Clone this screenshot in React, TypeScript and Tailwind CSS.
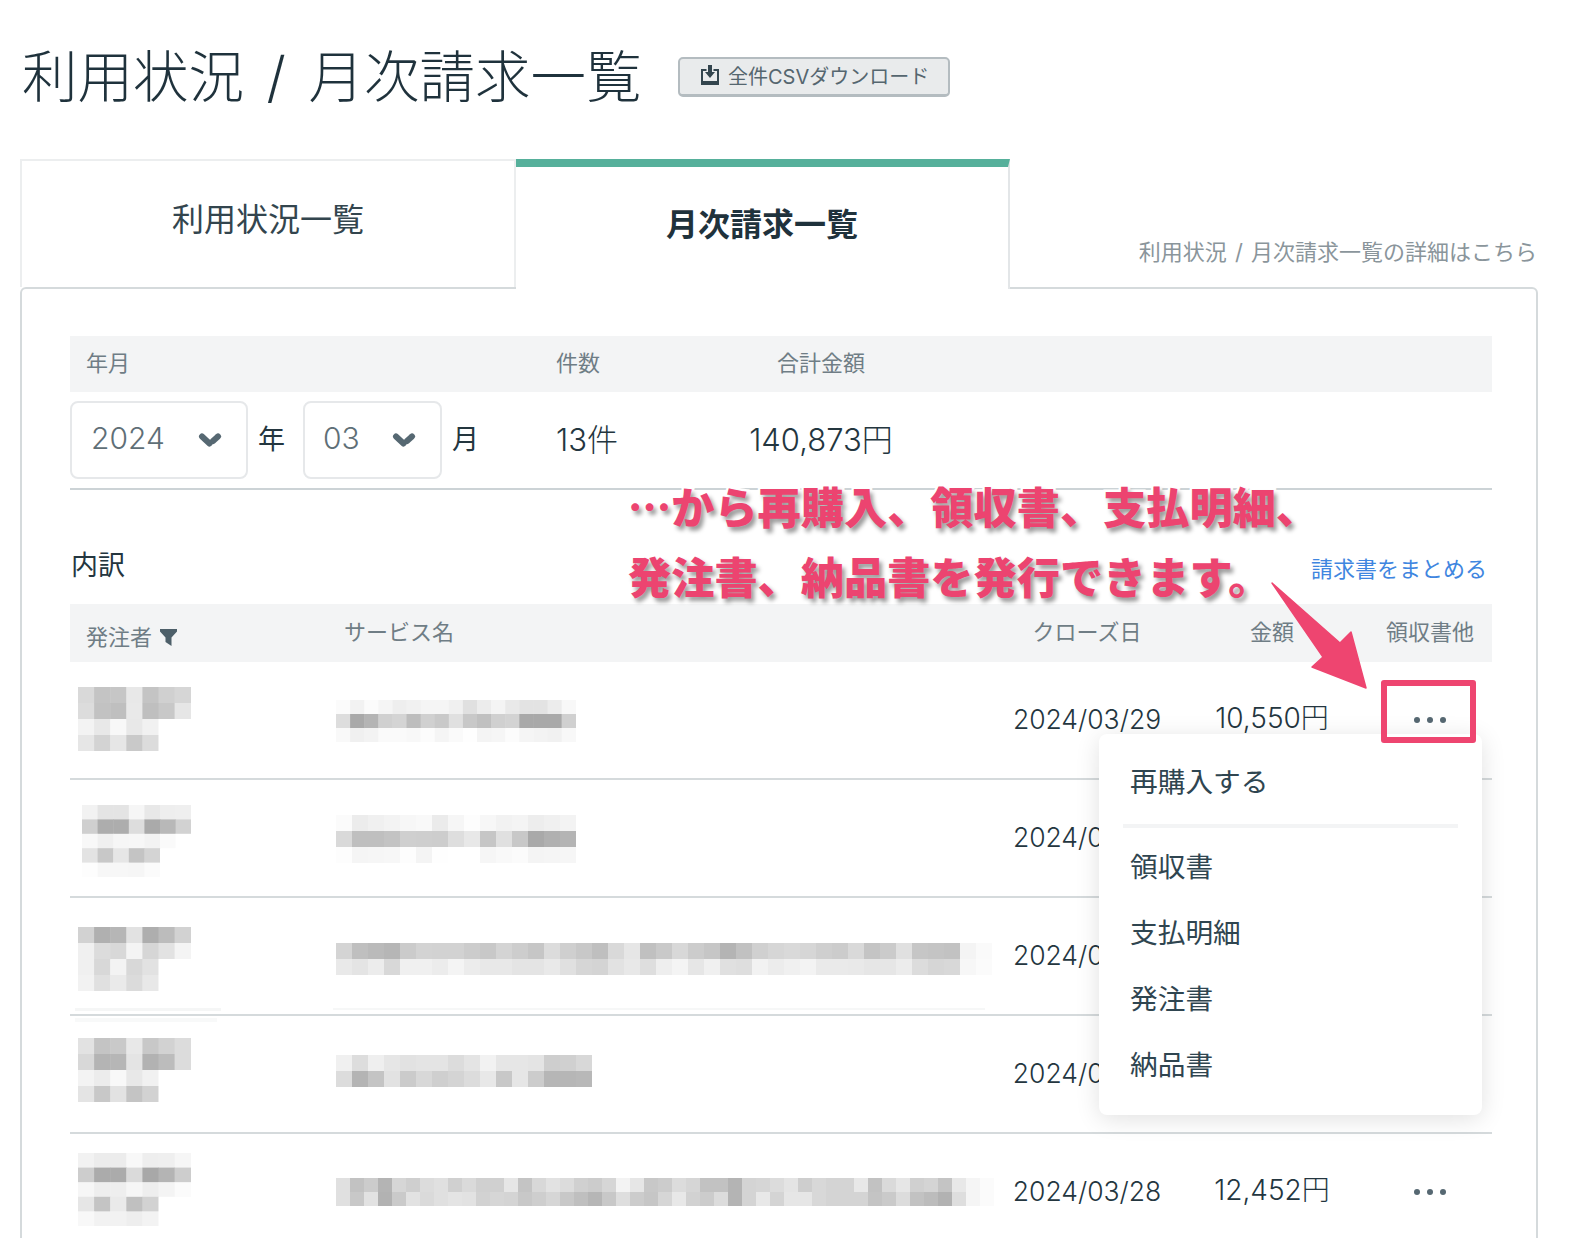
const font = 'font-["Inter","Noto_Sans_CJK_JP",sans-serif]'

type Block = { cols: string[]; w: number; h: number; cls: string }

// pixelated placeholders, each string is one row of grey levels
const rows: { date: string; amount?: string; name: Block; service: Block }[] = [
  {
    date: '2024/03/29',
    amount: '10,550円',
    name: {
      w: 16.1, h: 16, cls: 'ml-[8px] mt-[25px]',
      cols: ['d9 c4 c6 e8 c4 d0 d6', 'dc c2 bf e9 bf c8 e6', 'f3 e8 f8 e8 f1 ff ff', 'e6 d3 e6 c9 dc ff ff'],
    },
    service: {
      w: 14.1, h: 14, cls: 'mt-[38px]',
      cols: [
        'fb f2 fb f5 ee f1 f5 f5 f0 e0 ec f4 e9 e3 e3 ec f8',
        'dd a9 b4 d0 d4 bd d0 c9 e0 c8 c0 d0 d3 a9 a9 a9 d0',
        'f9 f0 f3 fa fa f8 fc f5 fa fe f4 f6 fc f5 f3 f1 f8',
      ],
    },
  },
  {
    date: '2024/03/29',
    name: {
      w: 15.6, h: 14.4, cls: 'ml-[12px] mt-[25px]',
      cols: ['f2 e4 e4 f6 e8 ee ef', 'cf ad ad dd aa b8 d2', 'f8 f0 f6 f7 f3 fa ff', 'e3 c8 e6 c4 d4 ff ff', 'fd f7 f7 f6 fb ff ff'],
    },
    service: {
      w: 16, h: 16, cls: 'mt-[35px]',
      cols: [
        'fb ec f0 f3 f7 f9 eb f6 fd f7 f2 f4 ed f0 f3',
        'd9 bf bf c3 cf ce cd de e8 c6 e0 c8 a9 b0 b4',
        'fd f5 f6 f7 fd f4 fe ff ff f6 f9 fb f4 f5 f6',
      ],
    },
  },
  {
    date: '2024/03/29',
    name: {
      w: 16.1, h: 16, cls: 'ml-[8px] mt-[29px]',
      cols: ['d2 b0 b6 e2 ae bc d2', 'f0 dc d8 f4 d6 e2 f4', 'f0 d8 f3 d8 e2 ff ff', 'f2 e0 ea db e8 ff ff'],
    },
    service: {
      w: 16, h: 16, cls: 'mt-[45px]',
      cols: [
        'd4 bf ba b6 cb d3 d2 d2 cc c8 d4 cd c6 dc cf c8 bf d9 e6 c0 c9 d8 cc c6 b4 c1 d0 d6 d9 d6 cf cc d9 c4 cb e0 c6 c4 c2 f4 fa',
        'e9 e4 ec d8 f0 f0 ec f4 ec e8 e8 e4 e4 e9 e0 d6 d4 e2 e8 de ee f4 e6 f0 e0 de f2 ec f0 f3 ea ea e9 e6 e6 ec dc d6 d8 f7 fb',
      ],
    },
  },
  {
    date: '2024/03/28',
    name: {
      w: 16.1, h: 16, cls: 'ml-[8px] mt-[22px]',
      cols: ['e2 c4 c9 e8 c8 d2 dc', 'd8 b4 b6 e4 b2 bc dc', 'f3 ec f8 e8 f1 ff ff', 'e4 c8 e2 c4 d2 ff ff'],
    },
    service: {
      w: 16, h: 16, cls: 'mt-[39px]',
      cols: [
        'f0 dd ef e6 e2 e4 e4 dc e4 f2 e6 e6 e4 ce d0 d8',
        'dc b4 c4 e2 cb d8 cf d4 dc e8 c8 e6 cc b6 b6 b8',
      ],
    },
  },
  {
    date: '2024/03/28',
    amount: '12,452円',
    name: {
      w: 16.1, h: 14.6, cls: 'ml-[8px] mt-[19px]',
      cols: ['f2 ec ec f8 ee ef f6', 'cd ab ab da a8 b4 cd', 'f6 ee ee f6 ee f4 fb', 'e6 c4 ea c0 d2 ff ff', 'f8 f2 f2 ee f3 ff ff'],
    },
    service: {
      w: 14, h: 14, cls: 'mt-[44px]',
      cols: [
        'e0 c2 cc b4 d6 cf dc e0 d0 da d0 d0 e6 c4 d8 e2 dc d0 cc d6 f3 e6 c8 cc dc d6 c2 c2 b4 d4 d6 dc e4 ce d8 d4 d4 e8 c2 da e6 d0 d4 c4 e8 f5 fb',
        'e0 c8 e2 b2 ca e2 da e0 e4 e2 d2 d6 d4 c8 ce d6 c8 bf b6 c8 de cc c6 d6 e8 d2 cc dc b4 d4 e8 d4 e6 e6 d8 d4 d4 d4 c4 ca dc c2 bc b2 de f5 fb',
      ],
    },
  },
]

function Mosaic({ block }: { block: Block }) {
  const grid = block.cols.map((r) => r.split(' '))
  const width = grid[0].length * block.w
  const height = grid.length * block.h
  return (
    <svg width={width} height={height} className={`block blur-[0.4px] ${block.cls}`}>
      {grid.map((r, y) =>
        r.map((c, x) => (
          <rect key={x} x={x * block.w} y={y * block.h} width={block.w + 0.5} height={block.h + 0.5} fill={`#${c}${c}${c}`} />
        ))
      )}
    </svg>
  )
}

function Chevron() {
  return (
    <svg width="24" height="14" viewBox="0 0 24 14" fill="none" stroke="#566872" strokeWidth="6" strokeLinecap="round">
      <path d="M4 3.5l7.5 7" />
      <path d="M20 3.5l-5 4.5" />
    </svg>
  )
}

function Dots() {
  return (
    <div className="flex justify-center gap-[7px]">
      <span className="h-[6px] w-[6px] rounded-full bg-[#566872]" />
      <span className="h-[6px] w-[6px] rounded-full bg-[#566872]" />
      <span className="h-[6px] w-[6px] rounded-full bg-[#566872]" />
    </div>
  )
}

export default function App() {
  return (
    <div className={`relative h-[1238px] w-[1584px] overflow-hidden bg-white text-[#24363f] ${font}`}>
      <div className="flex h-[154px] items-center pl-[22px]">
        <h1 className="w-[620px] whitespace-nowrap text-[55.5px] font-light leading-none text-[#1f323c] [word-spacing:7px]">利用状況 / 月次請求一覧</h1>
        <button className="ml-[36px] flex h-[40px] w-[272px] items-center rounded-[5px] border-2 border-b-[3px] border-[#b4bcc0] bg-[#e9ebec] pl-[20px] text-[20px] text-[#55666f]">
          <svg width="20" height="20" viewBox="0 0 20 20" fill="#33454e" className="mb-[3px] mr-[8px]">
            <path d="M1 4h5.5v2H3v10h14V6h-3.500V4H19v16H1zM4 17h12v1.500H4z" />
            <path d="M8 0h4v7h3l-5 6-5-6h3z" />
          </svg>
          全件CSVダウンロード
        </button>
      </div>

      <div className="ml-[20px] mt-[5px] w-[1518px]">
        <div className="flex h-[128px] items-stretch">
          <div className="flex w-[496px] items-center justify-center border-x-2 border-t-2 border-[#eceeef] pb-[9px] text-[32px] text-[#33454e]">
            利用状況一覧
          </div>
          <div className="relative z-10 -mb-[2px] flex h-[130px] w-[494px] items-center justify-center border-r-2 border-t-[8px] border-r-[#e3e6e8] border-t-[#56b09b] bg-white pb-[7px] text-[32px] font-bold text-[#1f323c]">
            月次請求一覧
          </div>
          <div className="flex flex-1 items-end justify-end pb-[19px] pr-[1px] text-[22px] leading-[32px] text-[#8a959b] [word-spacing:2px]">
            利用状況 / 月次請求一覧の詳細はこちら
          </div>
        </div>

        <div className="h-[1000px] rounded-t-[6px] border-2 border-[#d5dadc] pl-[48px] pr-[44px] pt-[47px]">
          <div className="grid h-[56px] grid-cols-[480px_150px_242px] items-center bg-[#f3f4f5] pb-[2px] text-[22px] text-[#6f7d85]">
            <span className="pl-[16px]">年月</span>
            <span className="pl-[6px]">件数</span>
            <span className="text-center">合計金額</span>
          </div>
          <div className="grid h-[98px] grid-cols-[480px_150px_242px] items-center border-b-2 border-[#ccd3d6] text-[31px] font-light">
            <div className="flex items-center">
              <div className="flex h-[78px] w-[178px] items-center justify-between rounded-[8px] border-2 border-[#e6e8ea] pl-[19px] pr-[24px] text-[#5f6f77]">
                <span className="pb-[4px] text-[30px]">2024</span>
                <Chevron />
              </div>
              <span className="ml-[10px] w-[45px] text-[27px] font-normal">年</span>
              <div className="flex h-[78px] w-[139px] items-center justify-between rounded-[8px] border-2 border-[#e6e8ea] pl-[18px] pr-[24px] text-[#5f6f77]">
                <span className="pb-[4px] text-[30px]">03</span>
                <Chevron />
              </div>
              <span className="ml-[10px] text-[27px] font-normal">月</span>
            </div>
            <span className="pl-[6px]">13件</span>
            <span className="text-center">140,873円</span>
          </div>

          <div className="flex h-[114px] items-end justify-between pb-[18px] pl-[1px] pr-[5px]">
            <span className="text-[27px] leading-[40px]">内訳</span>
            <span className="mb-[1px] text-[22px] leading-[32px] text-[#3f86e0]">請求書をまとめる</span>
          </div>

          <div className="grid h-[58px] grid-cols-[266px_666px_170px_200px_116px] items-center bg-[#f3f4f5] pb-[2px] text-[22px] text-[#6f7d85]">
            <span className="flex items-center pl-[16px] pt-[10px]">
              発注者
              <svg width="17" height="17" viewBox="0 0 17 17" fill="#4d5f69" className="ml-[8px]">
                <path d="M0 0h17v2.500l-5.500 6v8.500l-6-4V8.500L0 2.500z" />
              </svg>
            </span>
            <span className="pl-[8px]">サービス名</span>
            <span className="text-center">クローズ日</span>
            <span className="text-center">金額</span>
            <span className="text-center">領収書他</span>
          </div>

          {rows.map((row, i) => (
            <div key={i} className="grid h-[118px] grid-cols-[266px_666px_170px_200px_116px] border-b-2 border-[#d5dadc]">
              <div>
                <Mosaic block={row.name} />
              </div>
              <div>
                <Mosaic block={row.service} />
              </div>
              <div className="self-center text-center text-[26.5px] font-light">{row.date}</div>
              <div className="self-center pb-[4px] text-center text-[28px] font-light">{row.amount}</div>
              <div className="self-center">{row.amount && <Dots />}</div>
            </div>
          ))}
        </div>
      </div>

      <div className="absolute left-[1099px] top-[734px] z-20 h-[381px] w-[383px] rounded-[8px] bg-white pt-[24px] text-[27.7px] leading-[48px] text-[#2f4550] shadow-[0_4px_24px_rgba(0,0,0,0.12)]">
        <div className="pl-[31px]">再購入する</div>
        <div className="mx-[24px] mt-[18px] h-[4px] bg-[#f3f4f5]" />
        <div className="mt-[6px] flex h-[66px] items-center pl-[31px]">領収書</div>
        <div className="flex h-[66px] items-center pl-[31px]">支払明細</div>
        <div className="flex h-[66px] items-center pl-[31px]">発注書</div>
        <div className="flex h-[66px] items-center pl-[31px]">納品書</div>
      </div>

      <div className="absolute left-[75px] top-[1008px] h-[3px] w-[146px] bg-[#f5f6f6]" />
      <div className="absolute left-[75px] top-[1018px] h-[4px] w-[142px] bg-[#f8f9f9]" />
      <div className="absolute left-[333px] top-[1008px] h-[2px] w-[652px] bg-[#f6f7f7]" />

      <div className="absolute left-[1381px] top-[680px] z-30 h-[63px] w-[95px] rounded-[3px] border-[6px] border-[#ee4570]" />
      <svg className="absolute left-[1260px] top-[575px] z-30" width="120" height="125" viewBox="1260 575 120 125">
        <path d="M1272 583L1340 643L1351 632L1366 688L1312 667L1323 657Z" fill="#ee4570" stroke="#ee4570" strokeWidth="1.500" strokeLinejoin="round" />
      </svg>

      <div className='absolute left-[628px] top-[470px] z-30 whitespace-nowrap font-["Noto_Sans_CJK_JP",sans-serif] text-[43.2px] font-black leading-[70px] text-[#ec4470] [-webkit-text-stroke:5px_#fff] [paint-order:stroke_fill] [text-shadow:3px_4px_4px_rgba(0,0,0,0.4)]'>
        <div>…から再購入、領収書、支払明細、</div>
        <div>発注書、納品書を発行できます。</div>
      </div>
    </div>
  )
}
